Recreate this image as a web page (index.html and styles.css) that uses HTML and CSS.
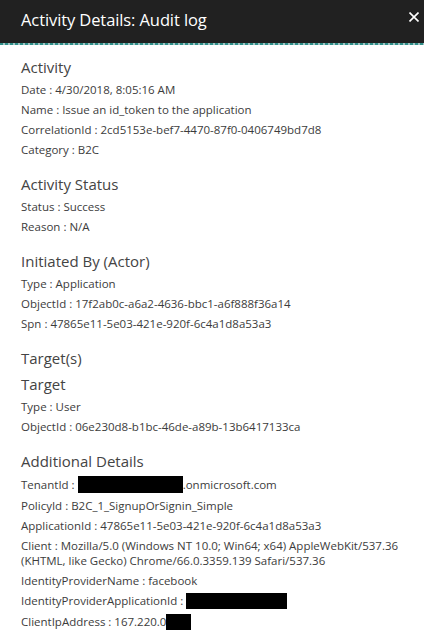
FILE: index.html
```html
<!DOCTYPE html>
<html>
<head>
<meta charset="utf-8">
<link rel="stylesheet" href="styles.css">
</head>
<body>
<div class="blade">
  <header class="blade-header">
    <h1 class="blade-title">Activity Details: Audit log</h1>
    <svg class="close" width="10" height="10" viewBox="0 0 10 10"><path d="M0.5 0.5 L9.5 9.5 M9.5 0.5 L0.5 9.5" stroke="#fff" stroke-width="1.6"/></svg>
  </header>
  <div class="blade-divider"></div>
  <main class="content">
    <section class="section">
      <h2 class="sec-title">Activity</h2>
      <p class="item">Date : 4/30/2018, 8:05:16 AM</p>
      <p class="item">Name : Issue an id_token to the application</p>
      <p class="item">CorrelationId : 2cd5153e-bef7-4470-87f0-0406749bd7d8</p>
      <p class="item">Category : B2C</p>
    </section>
    <section class="section">
      <h2 class="sec-title">Activity Status</h2>
      <p class="item">Status : Success</p>
      <p class="item">Reason : N/A</p>
    </section>
    <section class="section">
      <h2 class="sec-title">Initiated By (Actor)</h2>
      <p class="item">Type : Application</p>
      <p class="item">ObjectId : 17f2ab0c-a6a2-4636-bbc1-a6f888f36a14</p>
      <p class="item">Spn : 47865e11-5e03-421e-920f-6c4a1d8a53a3</p>
    </section>
    <section class="section">
      <h2 class="sec-title">Target(s)</h2>
      <h2 class="sec-title sub">Target</h2>
      <p class="item">Type : User</p>
      <p class="item">ObjectId : 06e230d8-b1bc-46de-a89b-13b6417133ca</p>
    </section>
    <section class="section">
      <h2 class="sec-title">Additional Details</h2>
      <p class="item">TenantId : <span class="redact r1"></span>.onmicrosoft.com</p>
      <p class="item">PolicyId : B2C_1_SignupOrSignin_Simple</p>
      <p class="item">ApplicationId : 47865e11-5e03-421e-920f-6c4a1d8a53a3</p>
      <p class="item">Client : Mozilla/5.0 (Windows NT 10.0; Win64; x64) AppleWebKit/537.36 (KHTML, like Gecko) Chrome/66.0.3359.139 Safari/537.36</p>
      <p class="item">IdentityProviderName : facebook</p>
      <p class="item">IdentityProviderApplicationId : <span class="redact r2"></span></p>
      <p class="item">ClientIpAddress : 167.220.0<span class="redact r3"></span></p>
    </section>
  </main>
</div>
</body>
</html>
```

FILE: styles.css
```css
html, body {
  margin: 0;
  padding: 0;
  background: #fff;
}
body {
  font-family: "Open Sans", "Noto Sans", sans-serif;
  color: #3a3a3a;
  width: 424px;
  height: 632px;
  overflow: hidden;
}
.blade-header {
  background: #212121;
  height: 43px;
  display: flex;
  align-items: center;
  justify-content: space-between;
  padding: 0 5px 0 21px;
}
.blade-title {
  margin: 0;
  font-weight: 400;
  font-size: 16.5px;
  color: #fff;
  letter-spacing: -0.1px;
  padding-bottom: 4px;
}
.close {
  margin-bottom: 9px;
}
.blade-divider {
  height: 2px;
  background: repeating-linear-gradient(90deg, #2f8f8a 0 3px, #a0c4c2 3px 5px);
}
.content {
  padding: 11px 8px 0 21px;
}
.section {
  margin-bottom: 16px;
}
.sec-title {
  margin: 0 0 4px;
  font-size: 15px;
  font-weight: 400;
  color: #444;
  line-height: 22px;
}
.sec-title.sub {
  margin-top: 1px;
}
.item {
  margin: 0 0 5px;
  font-size: 11.5px;
  line-height: 15px;
  color: #3c3c3c;
}
.redact {
  display: inline-block;
  background: #000;
  vertical-align: -4px;
  height: 17px;
}
.r1 { width: 105px; }
.r2 { width: 101px; height: 16px; }
.r3 { width: 25px; height: 16px; }
```
